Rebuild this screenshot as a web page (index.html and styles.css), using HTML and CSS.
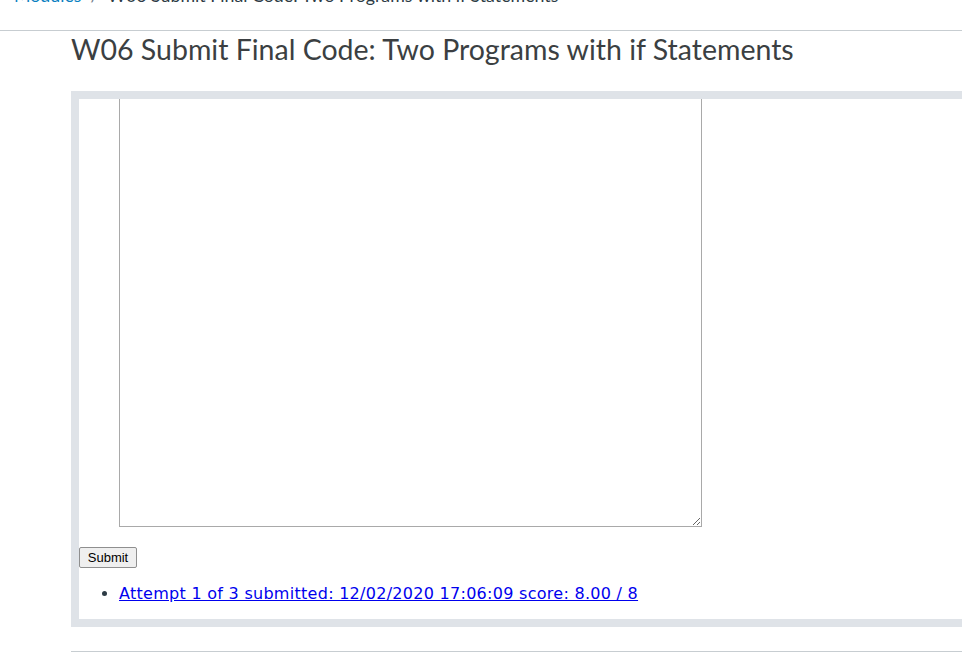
FILE: index.html
```html
<!DOCTYPE html>
<html lang="en">
<head>
<meta charset="utf-8">
<title>W06 Submit Final Code</title>
<link rel="stylesheet" href="styles.css">
</head>
<body>
<nav class="breadcrumbs">
  <div class="crumbs">
    <a class="crumb-link" href="#">Modules</a><span class="sep">/</span><span class="crumb-current">W06 Submit Final Code: Two Programs with if Statements</span>
  </div>
</nav>
<main class="content">
  <h1 class="page-title">W06 Submit Final Code: Two Programs with if Statements</h1>
  <div class="tool-frame">
    <div class="tool-doc">
      <form class="submit-form">
        <div class="code-wrap"><textarea class="code-area"></textarea></div>
        <button type="button" class="submit-btn">Submit</button>
      </form>
      <ul class="attempts">
        <li><a href="#" class="attempt-link">Attempt 1 of 3 submitted: 12/02/2020 17:06:09 score: 8.00 / 8</a></li>
      </ul>
    </div>
  </div>
  <hr class="divider">
</main>
</body>
</html>
```

FILE: styles.css
```css
html, body {
  margin: 0;
  padding: 0;
  background: #ffffff;
  overflow: hidden;
}

body {
  font-family: Lato, "Liberation Sans", sans-serif;
  color: #2d3b45;
}

.breadcrumbs {
  height: 30px;
  border-bottom: 1px solid #c7cdd1;
  overflow: hidden;
  padding-left: 14px;
}

.crumbs {
  font-size: 17.8px;
  line-height: 20px;
  margin-top: -15px;
  white-space: nowrap;
}

.crumb-link {
  color: #0a7fc1;
  text-decoration: none;
}

.sep {
  color: #73818c;
  margin: 0 9px;
}

.crumb-current {
  color: #2d3b45;
}

.content {
  padding-left: 71px;
}

.page-title {
  margin: 0 0 24px 0;
  padding-top: 1px;
  font-size: 28.5px;
  line-height: 35px;
  font-weight: 400;
  color: #3b3f42;
  white-space: nowrap;
}

.tool-frame {
  width: 1000px;
  border: 8px solid #dfe3e8;
  background: #ffffff;
}

.tool-doc {
  height: 520px;
  overflow: hidden;
}

.submit-form {
  margin: 0;
}

.code-wrap {
  padding-left: 40px;
  margin-top: -30px;
}

.code-area {
  display: block;
  box-sizing: border-box;
  width: 583px;
  height: 458px;
  border: 1px solid #a9a9a9;
  margin: 0 0 20px 0;
  padding: 2px;
  resize: both;
}

.submit-btn {
  display: block;
  font-family: "Liberation Sans", Arial, sans-serif;
  font-size: 13px;
  height: 21px;
  width: 58px;
  padding: 0;
  color: #000;
  background: #efefef;
  border: 1px solid #8f8f8f;
  border-radius: 2px;
}

.attempts {
  margin: 16px 0;
  padding-left: 40px;
  font-family: "DejaVu Sans", Verdana, sans-serif;
  font-size: 16px;
  letter-spacing: 0.28px;
  line-height: 20px;
}

.attempt-link {
  color: #0000ee;
}

.divider {
  margin: 24px 0 0 0;
  border: 0;
  border-top: 1px solid #c7cdd1;
  height: 0;
}
```
